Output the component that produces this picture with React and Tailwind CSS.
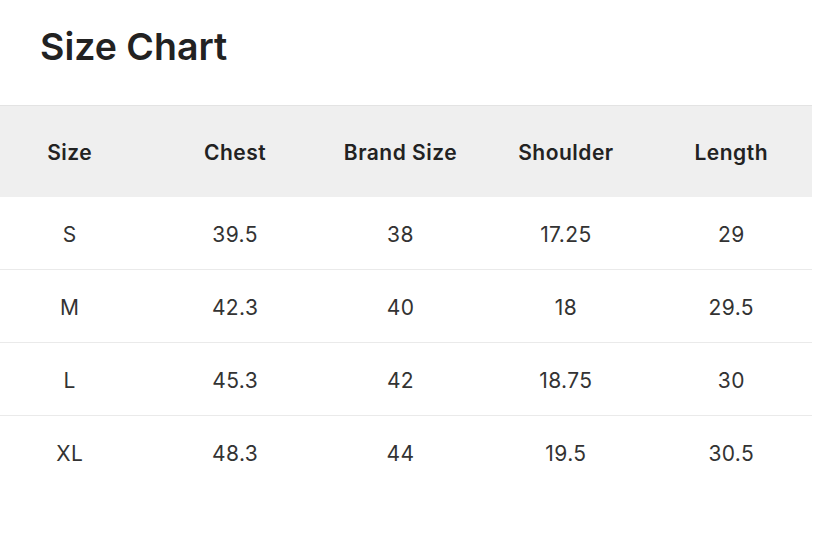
const headers = ["Size", "Chest", "Brand Size", "Shoulder", "Length"];

const rows = [
  ["S", "39.5", "38", "17.25", "29"],
  ["M", "42.3", "40", "18", "29.5"],
  ["L", "45.3", "42", "18.75", "30"],
  ["XL", "48.3", "44", "19.5", "30.5"],
];

export default function App() {
  return (
    <div className="min-h-[534px] w-[813px] bg-white font-['Inter','Liberation_Sans',sans-serif] text-[#222]">
      {/* Title */}
      <div className="h-[105px] px-10 pt-[23px]">
        <h1 className="text-[37.5px] leading-[48px] font-semibold text-[#222]">Size Chart</h1>
      </div>

      {/* Table */}
      <div className="w-[812px] overflow-hidden border-t border-[#e3e3e3]">
        <div className="-ml-[13px] w-[827px]">
          <div className="grid h-[91px] grid-cols-5 items-center bg-[#efefef] pt-[2px]">
            {headers.map((h) => (
              <div key={h} className="text-center text-[21px] font-semibold tracking-[0.5px] text-[#222]">
                {h}
              </div>
            ))}
          </div>
          {rows.map((r, i) => (
            <div
              key={r[0]}
              className={
                "grid h-[73px] grid-cols-5 items-center pt-[3px] " +
                (i < rows.length - 1 ? "border-b border-[#eaeaea]" : "")
              }
            >
              {r.map((c, j) => (
                <div key={j} className="text-center text-[21px] tracking-[0.4px] text-[#333]">
                  {c}
                </div>
              ))}
            </div>
          ))}
        </div>
      </div>
    </div>
  );
}
